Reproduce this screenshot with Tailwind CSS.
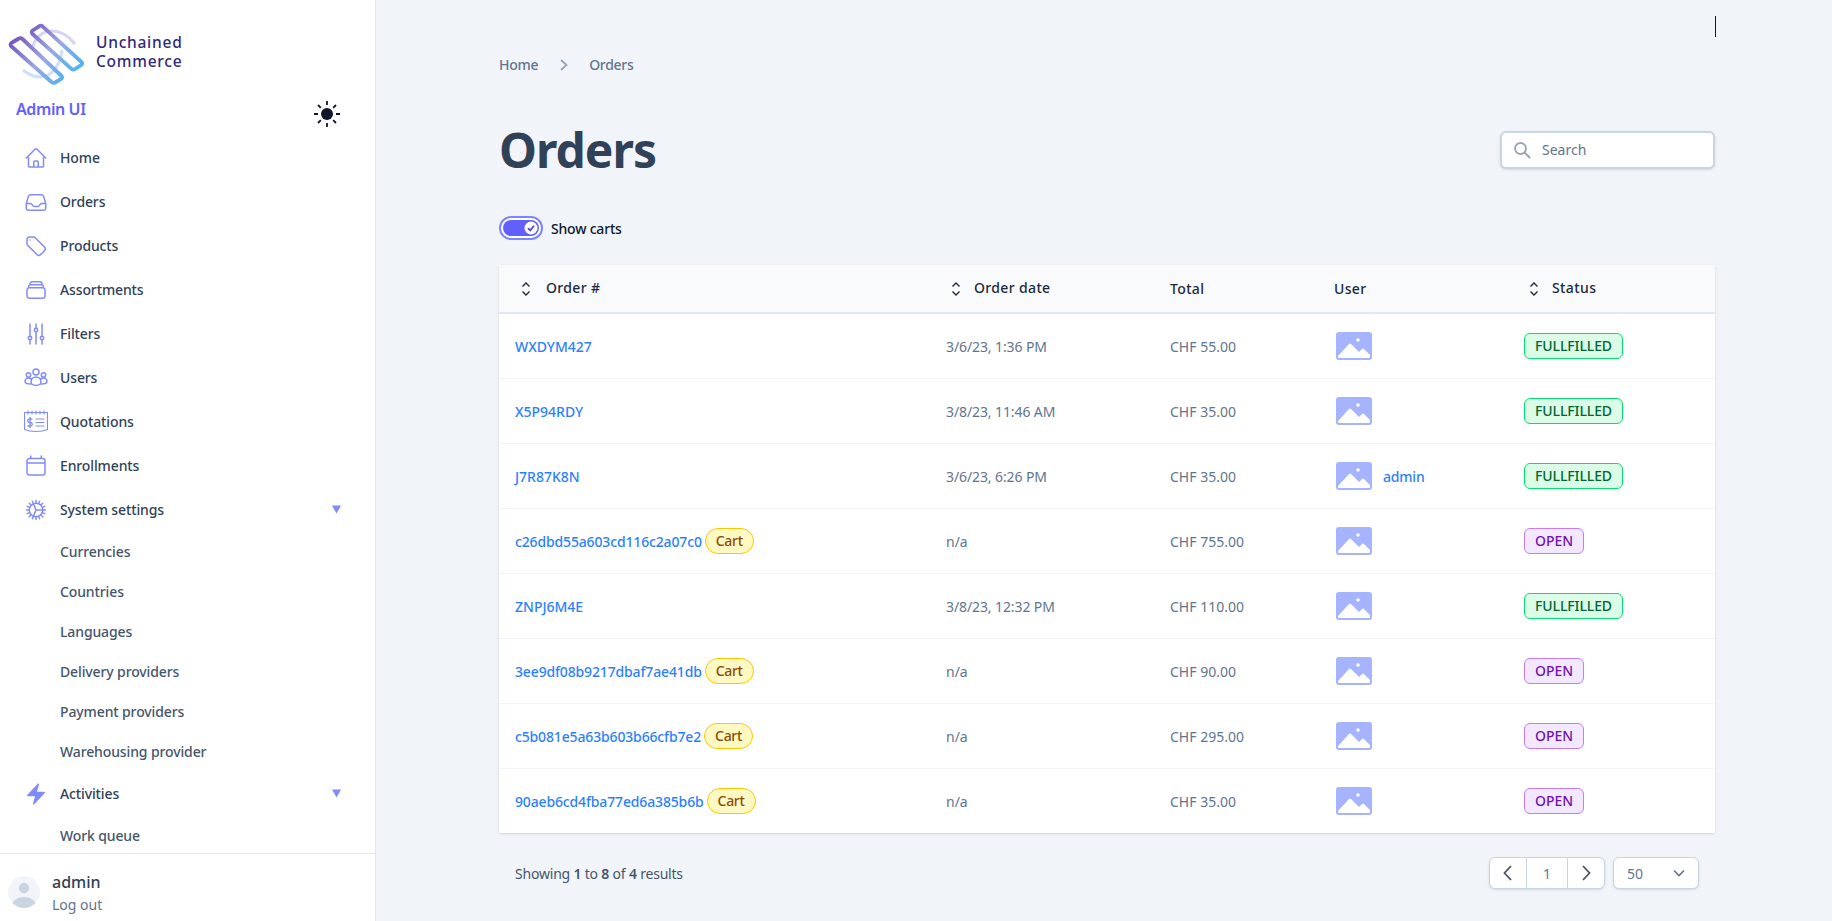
<!DOCTYPE html>
<html lang="en">
<head>
<meta charset="utf-8">
<title>Orders</title>
<script src="https://cdn.jsdelivr.net/npm/@tailwindcss/browser@4"></script>
</head>
<body class="font-['Noto_Sans',sans-serif] bg-[#f1f5f9] text-slate-700 overflow-hidden">
<div class="flex h-[921px] w-[1832px] overflow-hidden">
  <!-- SIDEBAR -->
  <aside class="w-[376px] h-full shrink-0 bg-white border-r border-slate-200 flex flex-col">
    <div class="flex-1 min-h-0 overflow-hidden">
      <div class="h-[96px] flex items-start">
        <svg class="shrink-0" width="92" height="96" viewBox="0 0 92 96" fill="none">
          <defs>
            <linearGradient id="lg" gradientUnits="userSpaceOnUse" x1="18" y1="32" x2="66" y2="78"><stop offset="0" stop-color="#7252c2"/><stop offset="0.55" stop-color="#9aa7e2"/><stop offset="1" stop-color="#56b3f0"/></linearGradient>
          </defs>
          <path d="M33 46C36 36 44 31 52 31C60 31 67 34 75 44" stroke="#d6d6f0" stroke-width="3"/>
          <path d="M23 70C29 75 35 77 41 77C50 77 60 68 62 50" stroke="#cde0f6" stroke-width="3"/>
          <path d="M13 42L19 38.500Q21 37.500 22.500 39L61.500 76Q63 78 61 79L55 82.500Q53 83.500 51.500 82L11 46Q9.500 43.500 13 42Z" stroke="url(#lg)" stroke-width="3.800" stroke-linejoin="round"/>
          <path d="M33.500 30L39 26.300Q41 25 42.500 26.300L81.500 62Q83 63.500 81.500 64.800L75 69Q73 70.300 71.500 68.800L32.500 34Q30.500 31.500 33.500 30Z" stroke="url(#lg)" stroke-width="3.800" stroke-linejoin="round"/>
        </svg>
        <div class="ml-[4px] mt-[33px] text-[15.5px] leading-[19px] tracking-[0.75px] font-medium text-[#2f2a7a]">Unchained<br>Commerce</div>
      </div>
      <div class="h-[40px] flex items-start justify-between pl-[16px] pr-[35px]">
        <span class="mt-[1px] text-[16px] leading-[24px] font-semibold tracking-[-0.4px] text-indigo-500">Admin UI</span>
        <svg class="mt-[5px]" width="26" height="26" viewBox="0 0 26 26" fill="#0f172a" stroke="#0f172a" stroke-width="1.800" stroke-linecap="butt"><circle cx="13" cy="13" r="6" stroke="none"/><path d="M13 0v4M13 22v4M0 13h4M22 13h4M4 4l2.800 2.800M19.200 19.200L22 22M4 22l2.800-2.800M19.200 6.800L22 4" fill="none"/></svg>
      </div>
      <nav class="flex flex-col text-[14px] font-medium tracking-[-0.12px] text-slate-700">
        <a class="h-[44px] flex items-center"><span class="w-[60px] pl-[24px] shrink-0"><svg width="24" height="24" viewBox="0 0 24 24" fill="none" stroke="#818cf8" stroke-width="1.500" stroke-linecap="round" stroke-linejoin="round"><path d="M2.250 12l8.955-8.955a1.125 1.125 0 011.591 0L21.750 12M4.500 9.750v10.125c0 .621.504 1.125 1.125 1.125H9.750v-4.875c0-.621.504-1.125 1.125-1.125h2.250c.621 0 1.125.504 1.125 1.125V21h4.125c.621 0 1.125-.504 1.125-1.125V9.750M8.250 21h8.250"/></svg></span><span class="pb-[2px]">Home</span></a>
        <a class="h-[44px] flex items-center"><span class="w-[60px] pl-[24px] shrink-0"><svg width="24" height="24" viewBox="0 0 24 24" fill="none" stroke="#818cf8" stroke-width="1.500" stroke-linecap="round" stroke-linejoin="round"><path d="M2.250 13.500h3.860a2.250 2.250 0 012.012 1.244l.256.512a2.250 2.250 0 002.013 1.244h3.218a2.250 2.250 0 002.013-1.244l.256-.512a2.250 2.250 0 012.013-1.244h3.859M2.250 13.500V18a2.250 2.250 0 002.250 2.250h15A2.250 2.250 0 0021.750 18v-4.500M2.250 13.500l2.200-7.200A2.250 2.250 0 016.600 4.700h10.800a2.250 2.250 0 012.150 1.600l2.200 7.200"/></svg></span><span class="pb-[2px]">Orders</span></a>
        <a class="h-[44px] flex items-center"><span class="w-[60px] pl-[24px] shrink-0"><svg width="24" height="24" viewBox="0 0 24 24" fill="none" stroke="#818cf8" stroke-width="1.500" stroke-linecap="round" stroke-linejoin="round"><path d="M9.568 3H5.250A2.250 2.250 0 003 5.250v4.318c0 .597.237 1.170.659 1.591l9.581 9.581c.699.699 1.780.872 2.607.330a18.095 18.095 0 005.223-5.223c.542-.827.369-1.908-.330-2.607L11.160 3.660A2.250 2.250 0 009.568 3z"/><path d="M6 6h.008v.008H6V6z"/></svg></span><span class="pb-[2px]">Products</span></a>
        <a class="h-[44px] flex items-center"><span class="w-[60px] pl-[24px] shrink-0"><svg width="24" height="24" viewBox="0 0 24 24" fill="none" stroke="#818cf8" stroke-width="1.500" stroke-linecap="round" stroke-linejoin="round"><path d="M6 6.878V6a2.250 2.250 0 012.250-2.250h7.500A2.250 2.250 0 0118 6v.878m-12 0c.235-.083.487-.128.750-.128h10.500c.263 0 .515.045.750.128m-12 0A2.250 2.250 0 004.500 9v.878m13.500-3A2.250 2.250 0 0119.500 9v.878m0 0a2.246 2.246 0 00-.750-.128H5.250c-.263 0-.515.045-.750.128m15 0A2.250 2.250 0 0121 12v6a2.250 2.250 0 01-2.250 2.250H5.250A2.250 2.250 0 013 18v-6c0-.98.626-1.813 1.500-2.122"/></svg></span><span class="pb-[2px]">Assortments</span></a>
        <a class="h-[44px] flex items-center"><span class="w-[60px] pl-[24px] shrink-0"><svg width="24" height="24" viewBox="0 0 24 24" fill="none" stroke="#818cf8" stroke-width="1.500" stroke-linecap="round" stroke-linejoin="round"><path d="M6 2v12M6 18v4M12 2v4M12 10v12M18 2v12M18 18v4"/><circle cx="6" cy="16" r="1.700"/><circle cx="12" cy="8" r="1.700"/><circle cx="18" cy="16" r="1.700"/></svg></span><span class="pb-[2px]">Filters</span></a>
        <a class="h-[44px] flex items-center"><span class="w-[60px] pl-[24px] shrink-0"><svg width="24" height="24" viewBox="0 0 24 24" fill="none" stroke="#818cf8" stroke-width="1.500" stroke-linecap="round" stroke-linejoin="round"><circle cx="12" cy="6" r="3"/><circle cx="4.500" cy="9" r="2.200"/><circle cx="19.500" cy="9" r="2.200"/><path d="M7 16c0-3 2.200-5 5-5s5 2 5 5c0 2-2.500 3.500-5 3.500S7 18 7 16z"/><path d="M7.300 13c-1-.6-2-.900-3-.900C2.500 12.100 1 13.500 1 15.200c0 1.500 2.500 2.800 6 2.800M16.700 13c1-.6 2-.900 3-.900 1.800 0 3.300 1.400 3.300 3.100 0 1.500-2.500 2.800-6 2.800"/></svg></span><span class="pb-[2px]">Users</span></a>
        <a class="h-[44px] flex items-center"><span class="w-[60px] pl-[24px] shrink-0"><svg width="24" height="24" viewBox="0 0 24 24" fill="none" stroke="#818cf8" stroke-width="1.200" stroke-linecap="round" stroke-linejoin="round"><path d="M.5 2.500h23v17c-3.500 1.500-7.500 2-11.500 2s-8-.5-11.500-2v-17z"/><path d="M4 1v3M8 1v3M12 1v3M16 1v3M20 1v3M12 9h8M12 12.500h8M12 16h8"/><path d="M8 9H5.500a1.500 1.500 0 000 3.500h1a1.500 1.500 0 010 3.500H4M6 7.500v10" stroke-width="1.300"/></svg></span><span class="pb-[2px]">Quotations</span></a>
        <a class="h-[44px] flex items-center"><span class="w-[60px] pl-[24px] shrink-0"><svg width="24" height="24" viewBox="0 0 24 24" fill="none" stroke="#818cf8" stroke-width="1.500" stroke-linecap="round" stroke-linejoin="round"><path d="M6.750 2v2.500M17.250 2v2.500M5.250 4.500h13.500A2.250 2.250 0 0121 6.750v12A2.250 2.250 0 0118.750 21H5.250A2.250 2.250 0 013 18.750v-12A2.250 2.250 0 015.250 4.500zM3 9h18"/></svg></span><span class="pb-[2px]">Enrollments</span></a>
        <a class="h-[44px] flex items-center"><span class="w-[60px] pl-[24px] shrink-0"><svg width="24" height="24" viewBox="0 0 24 24" fill="none" stroke="#818cf8" stroke-width="1.500" stroke-linecap="round" stroke-linejoin="round"><circle cx="12" cy="12" r="6.800"/><path d="M9.500 6l2.500 6-2.500 6M12 12h6.800"/><path d="M12 2.500v2M12 19.500v2M2.500 12h2M19.500 12h2M5.300 5.300l1.400 1.400M17.300 17.300l1.400 1.400M5.300 18.700l1.400-1.400M17.300 6.700l1.400-1.400M8.400 3.300l.7 1.700M14.900 19l.7 1.700M3.300 8.400l1.700.7M19 14.900l1.700.7M15.600 3.300l-.7 1.700M9.100 19l-.7 1.700M20.700 8.400l-1.700.7M5 14.900l-1.700.7" stroke-width="1.500"/></svg></span><span class="flex-1 pb-[2px]">System settings</span><svg class="mr-[34px] -mt-[1px]" width="9" height="9" viewBox="0 0 9 9" fill="#818cf8"><path d="M0 .5h9L4.500 8.500z"/></svg></a>
        <a class="h-[40px] flex items-center pl-[60px] pb-[2px] text-slate-600">Currencies</a>
        <a class="h-[40px] flex items-center pl-[60px] pb-[2px] text-slate-600">Countries</a>
        <a class="h-[40px] flex items-center pl-[60px] pb-[2px] text-slate-600">Languages</a>
        <a class="h-[40px] flex items-center pl-[60px] pb-[2px] text-slate-600">Delivery providers</a>
        <a class="h-[40px] flex items-center pl-[60px] pb-[2px] text-slate-600">Payment providers</a>
        <a class="h-[40px] flex items-center pl-[60px] pb-[2px] text-slate-600">Warehousing provider</a>
        <a class="h-[44px] flex items-center"><span class="w-[60px] pl-[24px] shrink-0"><svg width="24" height="24" viewBox="0 0 24 24" fill="#818cf8"><path fill-rule="evenodd" d="M14.615 1.595a.75.75 0 01.359.852L12.982 9.750h7.268a.75.75 0 01.548 1.262l-10.500 11.250a.75.75 0 01-1.272-.710l1.992-7.302H3.750a.75.75 0 01-.548-1.262l10.500-11.250a.75.75 0 01.913-.143z"/></svg></span><span class="flex-1 pb-[2px]">Activities</span><svg class="mr-[34px] -mt-[1px]" width="9" height="9" viewBox="0 0 9 9" fill="#818cf8"><path d="M0 .5h9L4.500 8.500z"/></svg></a>
        <a class="h-[40px] flex items-center pl-[60px] pb-[2px] text-slate-600">Work queue</a>
      </nav>
    </div>
    <div class="h-[68px] shrink-0 border-t border-slate-200 flex items-start pl-[8px] pt-[17px] bg-white">
      <div class="w-[32px] h-[32px] mt-[5px] rounded-full bg-slate-100 overflow-hidden shrink-0">
        <svg width="32" height="32" viewBox="0 0 32 32" fill="#cbd5e1"><circle cx="16" cy="12" r="5.200"/><path d="M4 29c1-5 6-8 12-8s11 3 12 8v3H4z"/></svg>
      </div>
      <div class="ml-[12px] -mt-[1px]">
        <div class="text-[16px] leading-[24px] font-medium text-slate-700">admin</div>
        <div class="text-[14px] leading-[22px] text-slate-500">Log out</div>
      </div>
    </div>
  </aside>

  <!-- MAIN -->
  <main class="flex-1 min-w-0 pl-[123px] pr-[117px] pt-[16px]">
    <div class="w-px h-[21px] bg-slate-900 ml-auto -mr-px"></div>
    <div class="mt-[18px] h-[20px] flex items-center text-[14px] font-medium tracking-[-0.3px] text-slate-500">
      <span class="pb-[2px]">Home</span>
      <svg class="ml-[20px]" width="12" height="20" viewBox="0 0 12 20" fill="none" stroke="#94a3b8" stroke-width="1.800"><path d="M3 5l5.500 5L3 15"/></svg>
      <span class="ml-[19px] pb-[2px]">Orders</span>
    </div>
    <div class="mt-[56px] h-[38px] flex items-center justify-between">
      <h1 class="text-[48px] leading-none font-bold tracking-[-1px] text-slate-700">Orders</h1>
      <div class="w-[215px] h-[38px] bg-white border-2 border-slate-300 rounded-md flex items-center pl-[11px] shadow-sm">
        <svg width="18" height="18" viewBox="0 0 18 18" fill="none" stroke="#94a3b8" stroke-width="1.800" stroke-linecap="round"><circle cx="7.500" cy="7.500" r="5.500"/><path d="M11.500 11.500L16.500 16.500"/></svg>
        <span class="ml-[11px] pb-[1px] text-[14px] text-slate-500">Search</span>
      </div>
    </div>
    <div class="mt-[47px] h-[24px] flex items-center">
      <div class="w-[44px] h-[24px] rounded-full border-2 border-indigo-400 p-[2px] bg-white">
        <div class="w-full h-full rounded-full bg-indigo-500 flex items-center justify-end pr-[1px]">
          <svg width="14" height="14" viewBox="0 0 14 14"><circle cx="7" cy="7" r="6.500" fill="#fff"/><path d="M4 7.200l2.200 2.200L10 4.800" fill="none" stroke="#4f46e5" stroke-width="1.800"/></svg>
        </div>
      </div>
      <span class="ml-[8px] text-[14px] font-medium tracking-[-0.2px] text-slate-900">Show carts</span>
    </div>

    <div class="mt-[25px] bg-white shadow">
      <table class="w-[1216px] table-fixed border-collapse text-[14px]">
        <colgroup><col class="w-[430px]"><col class="w-[225px]"><col class="w-[164px]"><col class="w-[190px]"><col class="w-[207px]"></colgroup>
        <thead class="bg-slate-50 text-slate-800">
          <tr class="h-[48px] border-b-2 border-slate-200 text-left tracking-wide">
            <th class="px-4 font-medium"><span class="flex items-center gap-[12px] pl-[3px]"><svg width="16" height="20" viewBox="0 0 16 20" fill="none" stroke="#1e293b" stroke-width="1.400"><path d="M4.500 7.500L8 4l3.500 3.500M4.500 12.500L8 16l3.500-3.500"/></svg><span class="pb-[2px]">Order #</span></span></th>
            <th class="px-4 font-medium"><span class="flex items-center gap-[10px] pl-[3px]"><svg width="16" height="20" viewBox="0 0 16 20" fill="none" stroke="#1e293b" stroke-width="1.400"><path d="M4.500 7.500L8 4l3.500 3.500M4.500 12.500L8 16l3.500-3.500"/></svg><span class="pb-[2px]">Order date</span></span></th>
            <th class="px-4 font-medium">Total</th>
            <th class="px-4 font-medium">User</th>
            <th class="px-4 font-medium"><span class="flex items-center gap-[10px] pl-[2px]"><svg width="16" height="20" viewBox="0 0 16 20" fill="none" stroke="#1e293b" stroke-width="1.400"><path d="M4.500 7.500L8 4l3.500 3.500M4.500 12.500L8 16l3.500-3.500"/></svg><span class="pb-[2px] tracking-[0.4px]">Status</span></span></th>
          </tr>
        </thead>
        <tbody class="text-slate-500">
          <tr class="h-[65px] border-b border-slate-100"><td class="px-4 pt-[2px]"><a class="font-medium text-blue-500">WXDYM427</a></td><td class="pl-[17px] pr-4 pt-[2px] tracking-[-0.1px]">3/6/23, 1:36 PM</td><td class="px-4 pt-[2px]">CHF 55.00</td><td class="px-4"><span class="flex items-center pl-[2px]"><svg width="36" height="28" viewBox="0 0 36 28"><rect width="36" height="28" rx="3" fill="#a5b4fc"/><circle cx="22" cy="8" r="1.800" fill="#fff"/><path d="M2 24L13 12Q14 11 15 12L23 20L26 17Q27 16 28 17L34 23V25Q34 26 33 26H3Q2 26 2 25Z" fill="#fff"/></svg></span></td><td class="px-4"><span class="inline-flex items-center h-[26px] px-[10px] rounded-md border border-green-400 bg-green-100 text-green-800 font-medium tracking-[-0.1px]">FULLFILLED</span></td></tr>
          <tr class="h-[65px] border-b border-slate-100"><td class="px-4 pt-[2px]"><a class="font-medium text-blue-500">X5P94RDY</a></td><td class="pl-[17px] pr-4 pt-[2px] tracking-[-0.1px]">3/8/23, 11:46 AM</td><td class="px-4 pt-[2px]">CHF 35.00</td><td class="px-4"><span class="flex items-center pl-[2px]"><svg width="36" height="28" viewBox="0 0 36 28"><rect width="36" height="28" rx="3" fill="#a5b4fc"/><circle cx="22" cy="8" r="1.800" fill="#fff"/><path d="M2 24L13 12Q14 11 15 12L23 20L26 17Q27 16 28 17L34 23V25Q34 26 33 26H3Q2 26 2 25Z" fill="#fff"/></svg></span></td><td class="px-4"><span class="inline-flex items-center h-[26px] px-[10px] rounded-md border border-green-400 bg-green-100 text-green-800 font-medium tracking-[-0.1px]">FULLFILLED</span></td></tr>
          <tr class="h-[65px] border-b border-slate-100"><td class="px-4 pt-[2px]"><a class="font-medium text-blue-500">J7R87K8N</a></td><td class="pl-[17px] pr-4 pt-[2px] tracking-[-0.1px]">3/6/23, 6:26 PM</td><td class="px-4 pt-[2px]">CHF 35.00</td><td class="px-4"><span class="flex items-center pl-[2px]"><svg width="36" height="28" viewBox="0 0 36 28"><rect width="36" height="28" rx="3" fill="#a5b4fc"/><circle cx="22" cy="8" r="1.800" fill="#fff"/><path d="M2 24L13 12Q14 11 15 12L23 20L26 17Q27 16 28 17L34 23V25Q34 26 33 26H3Q2 26 2 25Z" fill="#fff"/></svg><a class="ml-[11px] pt-[2px] font-medium tracking-[-0.2px] text-blue-500">admin</a></span></td><td class="px-4"><span class="inline-flex items-center h-[26px] px-[10px] rounded-md border border-green-400 bg-green-100 text-green-800 font-medium tracking-[-0.1px]">FULLFILLED</span></td></tr>
          <tr class="h-[65px] border-b border-slate-100"><td class="px-4"><a class="font-medium tracking-[-0.15px] text-blue-500">c26dbd55a603cd116c2a07c0</a><span class="inline-flex items-center h-[26px] ml-[3px] px-[10px] rounded-full border border-yellow-400 bg-yellow-100 text-yellow-800 font-medium tracking-[-0.3px]">Cart</span></td><td class="pl-[17px] pr-4 pt-[2px]">n/a</td><td class="px-4 pt-[2px]">CHF 755.00</td><td class="px-4"><span class="flex items-center pl-[2px]"><svg width="36" height="28" viewBox="0 0 36 28"><rect width="36" height="28" rx="3" fill="#a5b4fc"/><circle cx="22" cy="8" r="1.800" fill="#fff"/><path d="M2 24L13 12Q14 11 15 12L23 20L26 17Q27 16 28 17L34 23V25Q34 26 33 26H3Q2 26 2 25Z" fill="#fff"/></svg></span></td><td class="px-4"><span class="inline-flex items-center h-[26px] px-[10px] rounded-md border border-purple-400 bg-purple-100 text-purple-800 font-medium">OPEN</span></td></tr>
          <tr class="h-[65px] border-b border-slate-100"><td class="px-4 pt-[2px]"><a class="font-medium text-blue-500">ZNPJ6M4E</a></td><td class="pl-[17px] pr-4 pt-[2px] tracking-[-0.1px]">3/8/23, 12:32 PM</td><td class="px-4 pt-[2px]">CHF 110.00</td><td class="px-4"><span class="flex items-center pl-[2px]"><svg width="36" height="28" viewBox="0 0 36 28"><rect width="36" height="28" rx="3" fill="#a5b4fc"/><circle cx="22" cy="8" r="1.800" fill="#fff"/><path d="M2 24L13 12Q14 11 15 12L23 20L26 17Q27 16 28 17L34 23V25Q34 26 33 26H3Q2 26 2 25Z" fill="#fff"/></svg></span></td><td class="px-4"><span class="inline-flex items-center h-[26px] px-[10px] rounded-md border border-green-400 bg-green-100 text-green-800 font-medium tracking-[-0.1px]">FULLFILLED</span></td></tr>
          <tr class="h-[65px] border-b border-slate-100"><td class="px-4"><a class="font-medium tracking-[-0.15px] text-blue-500">3ee9df08b9217dbaf7ae41db</a><span class="inline-flex items-center h-[26px] ml-[3px] px-[10px] rounded-full border border-yellow-400 bg-yellow-100 text-yellow-800 font-medium tracking-[-0.3px]">Cart</span></td><td class="pl-[17px] pr-4 pt-[2px]">n/a</td><td class="px-4 pt-[2px]">CHF 90.00</td><td class="px-4"><span class="flex items-center pl-[2px]"><svg width="36" height="28" viewBox="0 0 36 28"><rect width="36" height="28" rx="3" fill="#a5b4fc"/><circle cx="22" cy="8" r="1.800" fill="#fff"/><path d="M2 24L13 12Q14 11 15 12L23 20L26 17Q27 16 28 17L34 23V25Q34 26 33 26H3Q2 26 2 25Z" fill="#fff"/></svg></span></td><td class="px-4"><span class="inline-flex items-center h-[26px] px-[10px] rounded-md border border-purple-400 bg-purple-100 text-purple-800 font-medium">OPEN</span></td></tr>
          <tr class="h-[65px] border-b border-slate-100"><td class="px-4"><a class="font-medium tracking-[-0.15px] text-blue-500">c5b081e5a63b603b66cfb7e2</a><span class="inline-flex items-center h-[26px] ml-[3px] px-[10px] rounded-full border border-yellow-400 bg-yellow-100 text-yellow-800 font-medium tracking-[-0.3px]">Cart</span></td><td class="pl-[17px] pr-4 pt-[2px]">n/a</td><td class="px-4 pt-[2px]">CHF 295.00</td><td class="px-4"><span class="flex items-center pl-[2px]"><svg width="36" height="28" viewBox="0 0 36 28"><rect width="36" height="28" rx="3" fill="#a5b4fc"/><circle cx="22" cy="8" r="1.800" fill="#fff"/><path d="M2 24L13 12Q14 11 15 12L23 20L26 17Q27 16 28 17L34 23V25Q34 26 33 26H3Q2 26 2 25Z" fill="#fff"/></svg></span></td><td class="px-4"><span class="inline-flex items-center h-[26px] px-[10px] rounded-md border border-purple-400 bg-purple-100 text-purple-800 font-medium">OPEN</span></td></tr>
          <tr class="h-[65px]"><td class="px-4"><a class="font-medium tracking-[-0.15px] text-blue-500">90aeb6cd4fba77ed6a385b6b</a><span class="inline-flex items-center h-[26px] ml-[3px] px-[10px] rounded-full border border-yellow-400 bg-yellow-100 text-yellow-800 font-medium tracking-[-0.3px]">Cart</span></td><td class="pl-[17px] pr-4 pt-[2px]">n/a</td><td class="px-4 pt-[2px]">CHF 35.00</td><td class="px-4"><span class="flex items-center pl-[2px]"><svg width="36" height="28" viewBox="0 0 36 28"><rect width="36" height="28" rx="3" fill="#a5b4fc"/><circle cx="22" cy="8" r="1.800" fill="#fff"/><path d="M2 24L13 12Q14 11 15 12L23 20L26 17Q27 16 28 17L34 23V25Q34 26 33 26H3Q2 26 2 25Z" fill="#fff"/></svg></span></td><td class="px-4"><span class="inline-flex items-center h-[26px] px-[10px] rounded-md border border-purple-400 bg-purple-100 text-purple-800 font-medium">OPEN</span></td></tr>
        </tbody>
      </table>
    </div>

    <div class="mt-[24px] h-[32px] flex items-center justify-between px-4">
      <p class="text-[14px] tracking-[-0.2px] text-slate-600">Showing <b class="font-semibold">1</b> to <b class="font-semibold">8</b> of <b class="font-semibold">4</b> results</p>
      <div class="flex items-center gap-[8px]">
        <div class="w-[116px] h-[32px] flex bg-white border border-slate-300 rounded-md shadow-sm text-[14px] text-slate-500">
          <span class="w-[37px] flex items-center justify-center border-r border-slate-300"><svg width="12" height="18" viewBox="0 0 12 18" fill="none" stroke="#475569" stroke-width="1.800"><path d="M9 2L2.500 9 9 16"/></svg></span>
          <span class="w-[41px] flex items-center justify-center border-r border-slate-300">1</span>
          <span class="flex-1 flex items-center justify-center"><svg width="12" height="18" viewBox="0 0 12 18" fill="none" stroke="#475569" stroke-width="1.800"><path d="M3 2l6.500 7L3 16"/></svg></span>
        </div>
        <div class="w-[86px] h-[32px] flex items-center justify-between bg-white border border-slate-300 rounded-md shadow-sm pl-[13px] pr-[13px] text-[14px] text-slate-500">
          <span>50</span>
          <svg width="12" height="8" viewBox="0 0 12 8" fill="none" stroke="#64748b" stroke-width="1.600"><path d="M1 1.500l5 5 5-5"/></svg>
        </div>
      </div>
    </div>
  </main>
</div>
</body>
</html>
